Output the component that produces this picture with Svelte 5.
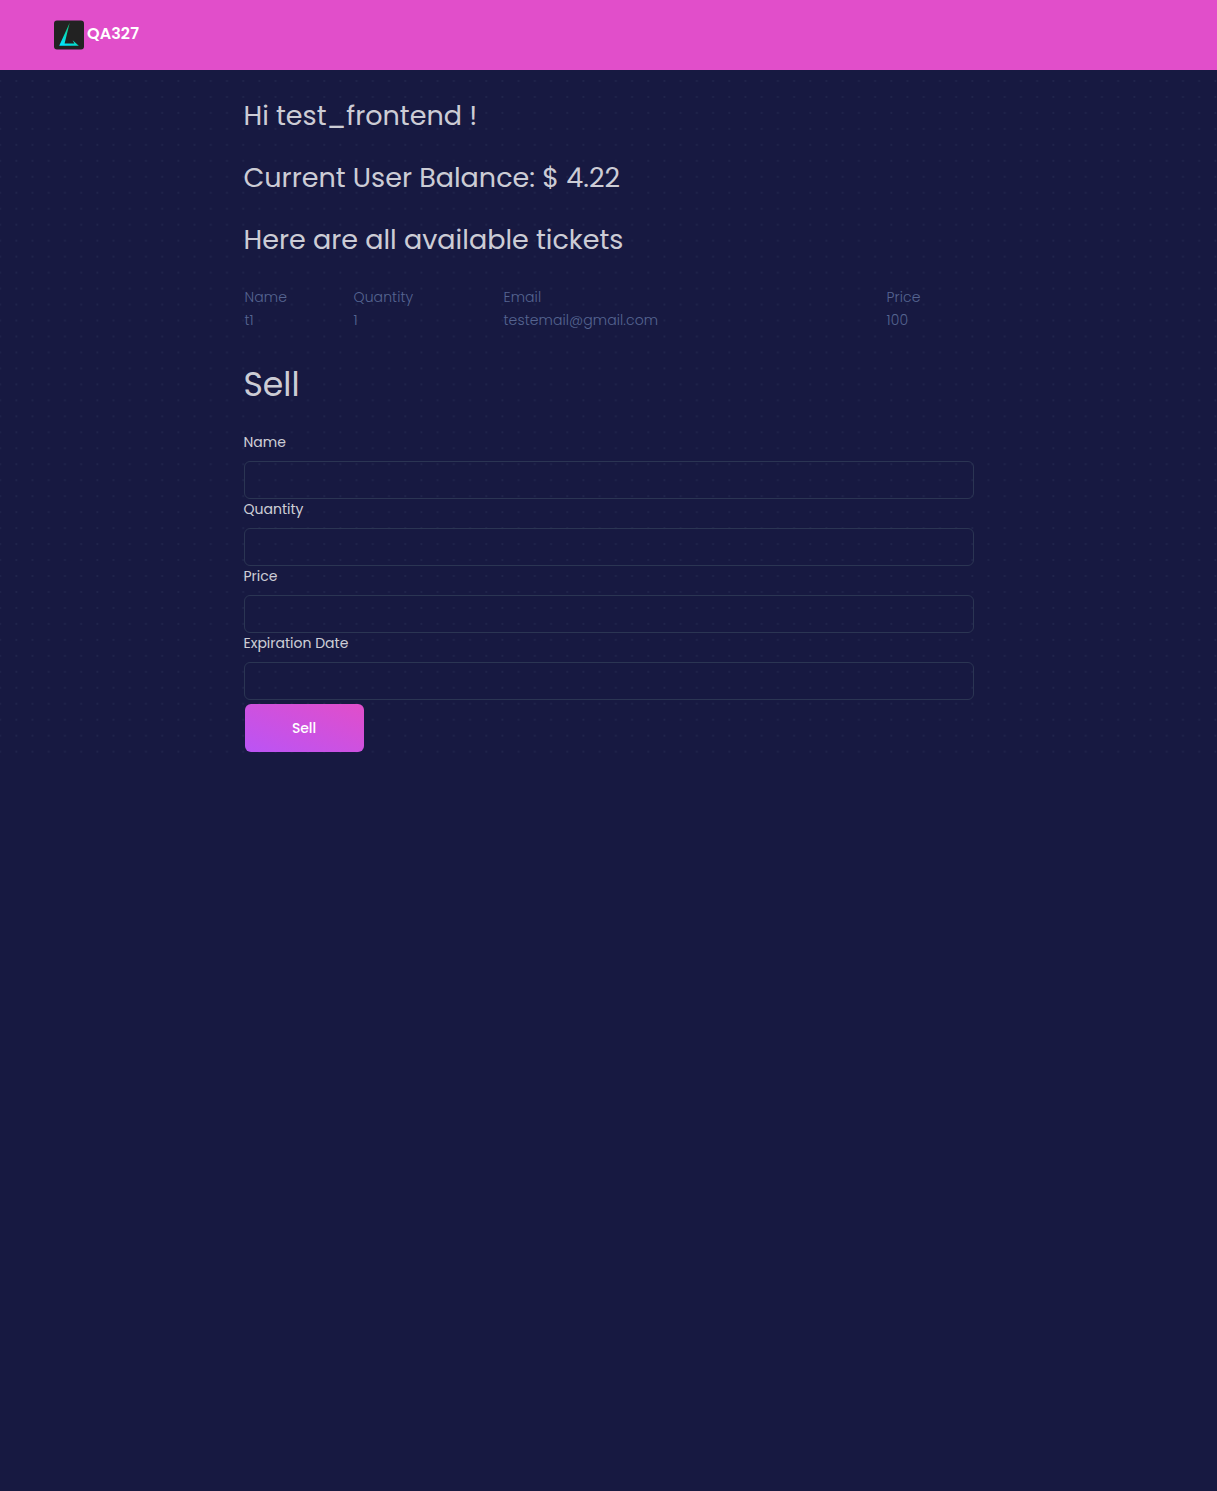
<script>
  let fields = $state([
    { id: 'name', label: 'Name', value: '' },
    { id: 'quantity', label: 'Quantity', value: '' },
    { id: 'price', label: 'Price', value: '' },
    { id: 'expiration', label: 'Expiration Date', value: '' }
  ]);
  const tickets = [{ name: 't1', quantity: 1, email: 'testemail@gmail.com', price: 100 }];
</script>

<div class="page">
  <header>
    <svg class="logo" viewBox="0 0 30 30" aria-hidden="true">
      <defs>
        <linearGradient id="mark" x1="0.2" y1="1" x2="0.75" y2="0.1">
          <stop offset="0" stop-color="#00e5ff" />
          <stop offset="1" stop-color="#12c96f" />
        </linearGradient>
      </defs>
      <rect y="0.5" width="30" height="29" rx="3" fill="#222222" />
      <path d="M15.7 2.8 L5.2 25.8 H24.8 L18.6 20.2 L20.3 23.6 H10.6 Z" fill="url(#mark)" />
    </svg>
    <span class="brand">QA327</span>
  </header>

  <main>
    <div class="content">
      <h2>Hi test_frontend !</h2>
      <h2>Current User Balance: $ 4.22</h2>
      <h2>Here are all available tickets</h2>

      <div class="tickets">
        <span>Name</span><span>Quantity</span><span>Email</span><span>Price</span>
        {#each tickets as t}
          <span>{t.name}</span><span>{t.quantity}</span><span>{t.email}</span><span>{t.price}</span>
        {/each}
      </div>

      <h1>Sell</h1>
      <form onsubmit={(e) => e.preventDefault()}>
        {#each fields as f}
          <label for={f.id}>{f.label}</label>
          <input id={f.id} type="text" bind:value={f.value} />
        {/each}
        <button type="submit">Sell</button>
      </form>
    </div>
  </main>
</div>

<style>
  :global(body) { background: #171941; }
  .page {
    min-height: 1491px;
    box-sizing: border-box;
    background: #171941;
    color: rgba(255, 255, 255, 0.8);
    font-family: Poppins, Inter, sans-serif;
    font-size: 14px;
  }
  header {
    box-sizing: border-box;
    height: 70px;
    padding: 0 54px;
    display: flex;
    align-items: center;
    gap: 3px;
    background: #e14eca;
  }
  .logo { width: 30px; height: 30px; }
  .brand {
    margin-top: -3px;
    color: #fff;
    font-size: 16px;
    font-weight: 600;
    letter-spacing: 0.08px;
  }
  main {
    height: 690px;
    background-image: radial-gradient(circle at 8px 11px, #20244b 0.7px, transparent 1.35px);
    background-size: 16.21px 15.97px;
    background-position: -7.84px 0;
  }
  .content {
    width: 730px;
    margin: 0 auto;
    padding-top: 15px;
  }
  h1, h2 { margin: 0; font-weight: 400; }
  h2 {
    height: 62px;
    line-height: 62px;
    font-size: 27px;
    white-space: nowrap;
  }
  h1 {
    margin: 31px 0 25px;
    height: 44px;
    line-height: 44px;
    font-size: 33px;
  }
  .tickets {
    display: grid;
    grid-template-columns: 109px 150px 383px 1fr;
    grid-auto-rows: 23px;
    line-height: 23px;
    margin-top: 15px;
    padding-left: 1px;
    color: #566591;
    font-weight: 300;
    letter-spacing: 0.1px;
  }
  form { display: flex; flex-direction: column; align-items: flex-start; }
  label {
    height: 29px;
    line-height: 20px;
  }
  input {
    box-sizing: border-box;
    width: 730px;
    height: 38px;
    padding: 8px 18px;
    border: 1px solid #2b3553;
    border-radius: 6px;
    background: transparent;
    color: rgba(255, 255, 255, 0.8);
    font: inherit;
    outline: none;
  }
  button {
    width: 119px;
    height: 48px;
    margin: 4px 1px;
    padding: 0;
    border: 0;
    border-radius: 6px;
    background: linear-gradient(to bottom left, #e14eca, #ba54f5);
    color: #fff;
    font: inherit;
    font-weight: 500;
    letter-spacing: -0.15px;
  }
</style>
